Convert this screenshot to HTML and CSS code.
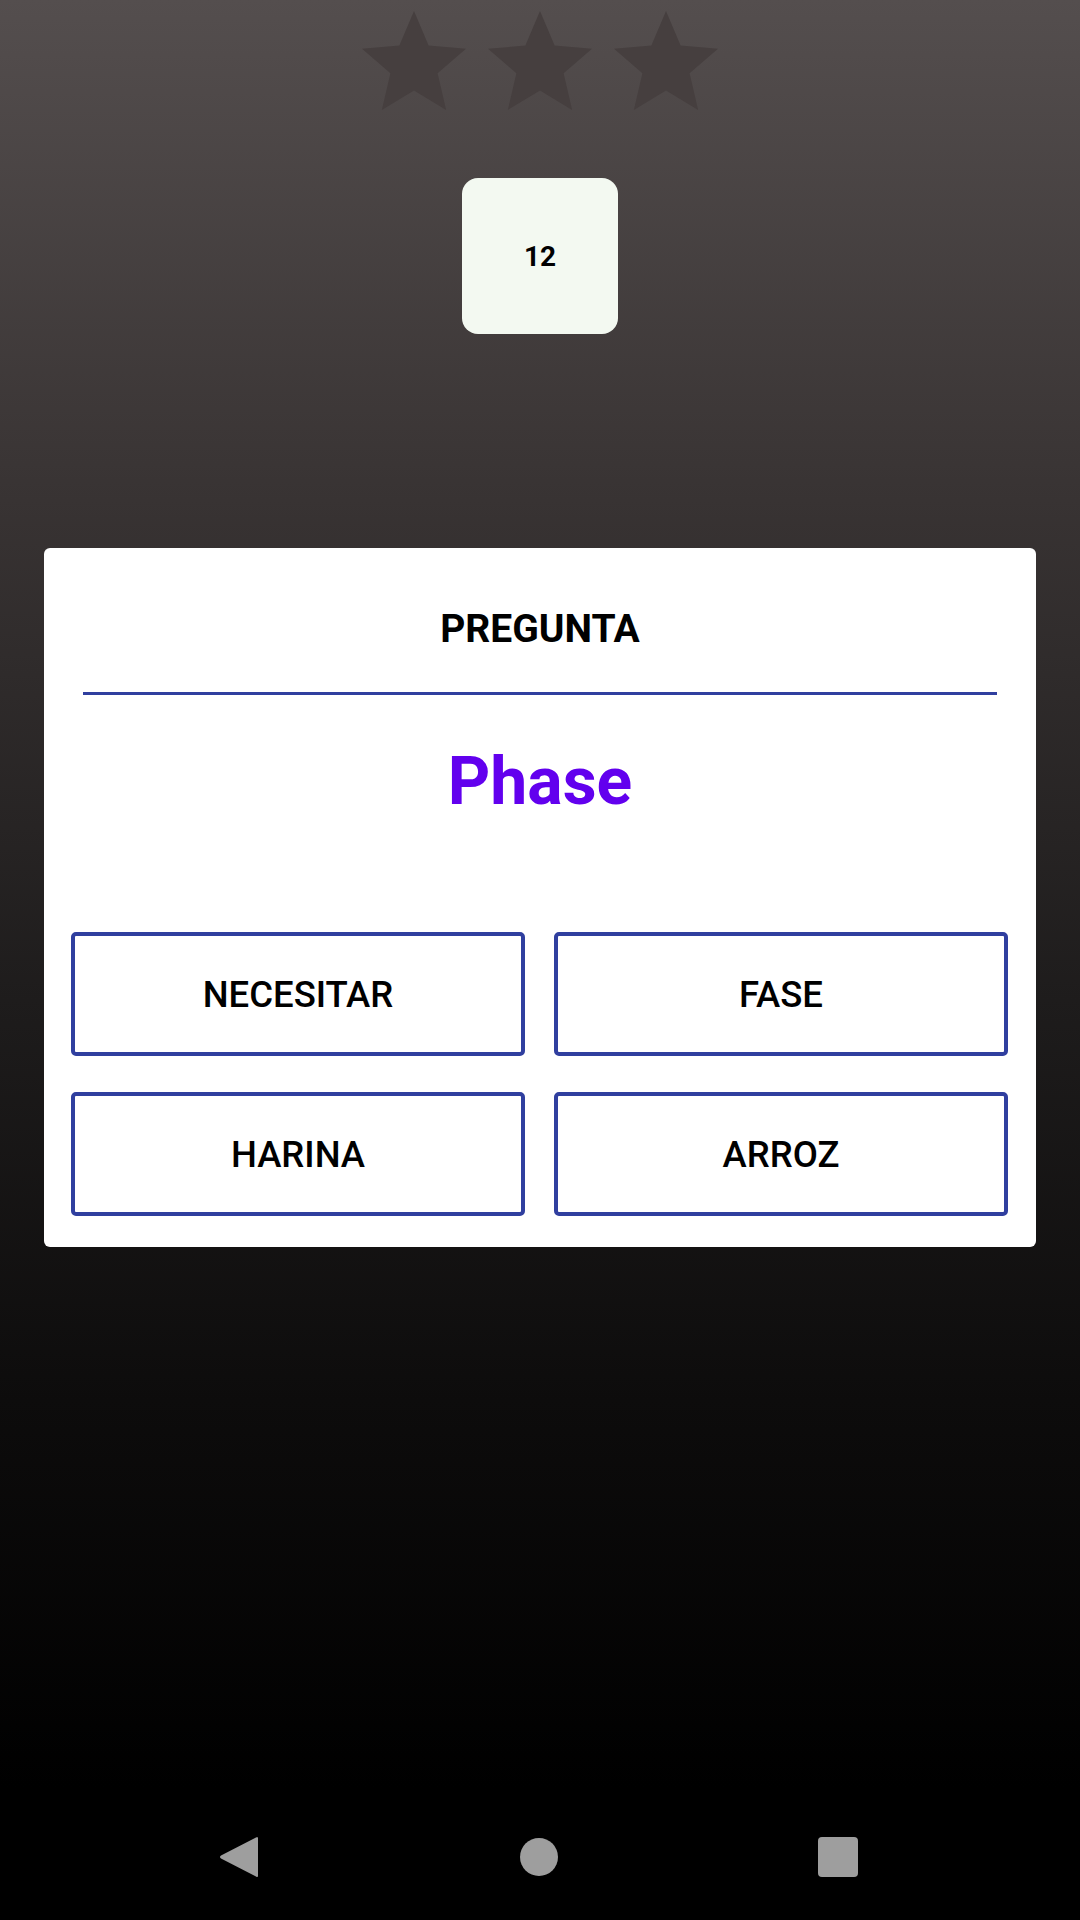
FILE: index.html
```html
<!DOCTYPE html>
<html lang="es">
<head>
<meta charset="utf-8">
<title>Pregunta</title>
<link rel="stylesheet" href="styles.css">
</head>
<body>
<div class="screen">
  <div class="stars">
    <svg class="star" viewBox="2 2 20 19" width="104" height="99"><path d="M12 17.27L18.18 21l-1.64-7.03L22 9.24l-7.19-.61L12 2 9.19 8.63 2 9.24l5.46 4.73L5.82 21z"/></svg>
    <svg class="star" viewBox="2 2 20 19" width="104" height="99"><path d="M12 17.27L18.18 21l-1.64-7.03L22 9.24l-7.19-.61L12 2 9.19 8.63 2 9.24l5.46 4.73L5.82 21z"/></svg>
    <svg class="star" viewBox="2 2 20 19" width="104" height="99"><path d="M12 17.27L18.18 21l-1.64-7.03L22 9.24l-7.19-.61L12 2 9.19 8.63 2 9.24l5.46 4.73L5.82 21z"/></svg>
  </div>
  <div class="counter">12</div>
  <div class="card">
    <div class="title">PREGUNTA</div>
    <div class="divider"></div>
    <div class="word">Phase</div>
    <div class="answers">
      <div class="answer">NECESITAR</div>
      <div class="answer">FASE</div>
      <div class="answer">HARINA</div>
      <div class="answer">ARROZ</div>
    </div>
  </div>
  <div class="navbar">
    <svg class="nav-icon" viewBox="0 0 42 44" width="42" height="44"><path d="M40 3.5 L40 40.5 Q40 43 38 41.4 L3 23.5 Q1 22 3 20.5 L38 2.6 Q40 1 40 3.5 Z"/></svg>
    <div class="nav-home"></div>
    <div class="nav-recent"></div>
  </div>
</div>
</body>
</html>
```
FILE: styles.css
```css
html, body {
  margin: 0;
  padding: 0;
}
body {
  font-family: Roboto, "Liberation Sans", sans-serif;
}
.screen {
  width: 1080px;
  height: 1920px;
  display: flex;
  flex-direction: column;
  align-items: center;
  background: linear-gradient(to bottom, #544e4e 0px, #383333 500px, #1e1c1c 1000px, #0d0c0c 1400px, #000 1788px);
}
.stars {
  display: flex;
  gap: 22px;
  padding-top: 11px;
}
.star {
  fill: #463f3f;
  display: block;
}
.counter {
  margin-top: 68px;
  width: 156px;
  height: 156px;
  border-radius: 16px;
  background: #f3f9f1;
  display: flex;
  align-items: center;
  justify-content: center;
  font-weight: 700;
  font-size: 28px;
  color: #000;
}
.card {
  margin-top: 214px;
  width: 992px;
  box-sizing: border-box;
  background: #fff;
  border-radius: 6px;
  padding: 57px 0 31px;
  display: flex;
  flex-direction: column;
}
.title {
  text-align: center;
  font-weight: 700;
  font-size: 39px;
  line-height: 48px;
  color: #000;
}
.divider {
  margin: 39px 39px 0;
  height: 3px;
  background: #303f9f;
}
.word {
  margin-top: 47px;
  text-align: center;
  font-weight: 700;
  font-size: 66px;
  line-height: 80px;
  color: #6200ee;
}
.answers {
  margin-top: 110px;
  padding: 0 28px 0 27px;
  display: grid;
  grid-template-columns: 1fr 1fr;
  gap: 36px 29px;
}
.answer {
  height: 124px;
  box-sizing: border-box;
  border: 4px solid #303f9f;
  border-radius: 5px;
  display: flex;
  align-items: center;
  justify-content: center;
  font-weight: 500;
  font-size: 36.5px;
  color: #000;
}
.navbar {
  margin-top: auto;
  width: 100%;
  height: 126px;
  background: #000;
  display: flex;
  align-items: center;
  justify-content: space-between;
  box-sizing: border-box;
  padding: 0 222px 0 218px;
}
.nav-icon {
  fill: #9e9e9e;
  display: block;
}
.nav-home {
  width: 38px;
  height: 38px;
  border-radius: 50%;
  background: #9e9e9e;
}
.nav-recent {
  width: 40px;
  height: 40px;
  border-radius: 4px;
  background: #9e9e9e;
}
```
